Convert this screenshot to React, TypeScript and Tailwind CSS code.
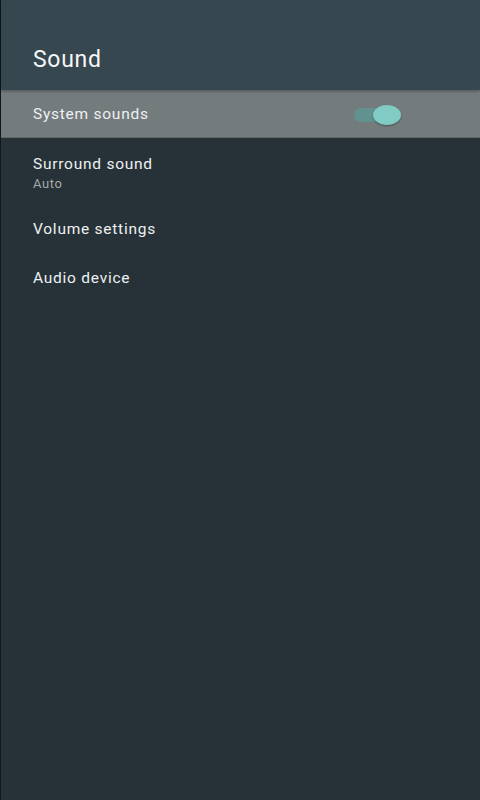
import React from 'react';

function Toggle({ on }: { on: boolean }) {
  return (
    <div className="relative h-[20px] w-[48px]">
      <div
        className={`absolute left-[1px] top-[3px] h-[14px] w-[30px] rounded-full ${
          on ? 'bg-[#62928f]' : 'bg-[#5b6366]'
        }`}
      />
      <div
        className={`absolute top-0 h-[20px] w-[28px] rounded-[50%] shadow-[0_1px_2px_rgba(0,0,0,0.35)] ${
          on ? 'left-[20px] bg-[#80cbc4]' : 'left-0 bg-[#eceff1]'
        }`}
      />
    </div>
  );
}

const rows = [
  { title: 'Surround sound', sub: 'Auto' },
  { title: 'Volume settings' },
  { title: 'Audio device' },
];

export default function App() {
  return (
    <div
      className="flex h-[800px] w-[480px] flex-col border-l border-[#0e1a1a] bg-[#263238] text-white"
      style={{ fontFamily: 'Roboto, "Noto Sans", sans-serif' }}
    >
      <header className="relative z-10 flex h-[90px] items-end bg-[#37474f] pb-[19px] pl-[32px] shadow-[0_1px_3px_rgba(0,0,0,0.35)]">
        <h1 className="text-[23px] leading-none tracking-[0.7px] text-[#f5f7f8]">Sound</h1>
      </header>

      <div className="flex h-[48px] items-center justify-between border-b border-[#5f6668] bg-[#747b7d] pl-[32px] pr-[79px] pt-[2px]">
        <span className="text-[15.5px] tracking-[0.75px] text-[#eef0f1]">System sounds</span>
        <Toggle on />
      </div>

      <div className="flex flex-col">
        {rows.map((r) => (
          <div
            key={r.title}
            className={`flex flex-col justify-center pl-[32px] ${r.sub ? 'h-[66px] pt-[4px]' : 'h-[49px]'}`}
          >
            <span className="text-[15.5px] leading-[20px] tracking-[0.75px] text-[#eef0f1]">{r.title}</span>
            {r.sub && (
              <span className="mt-[2px] text-[13px] leading-[16px] tracking-[0.6px] text-[#a3a9ac]">{r.sub}</span>
            )}
          </div>
        ))}
      </div>
    </div>
  );
}
